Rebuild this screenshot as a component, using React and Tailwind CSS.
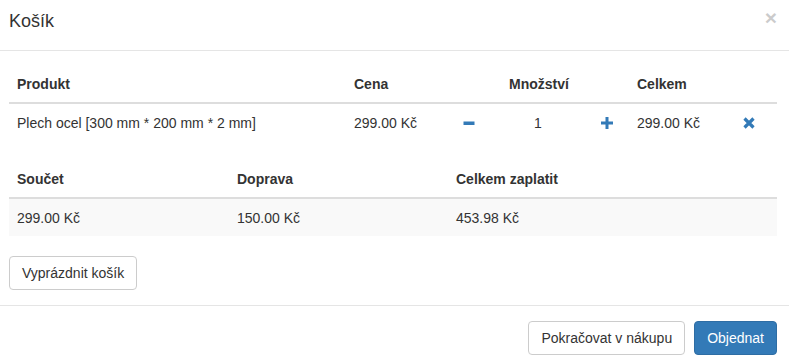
import React from 'react';

const items = [
   { name: 'Plech ocel [300 mm * 200 mm * 2 mm]', price: '299.00 Kč', qty: 1, total: '299.00 Kč' },
];

function Minus() {
   return (
      <svg width="12" height="12" viewBox="0 0 12 12" className="inline-block align-middle fill-[#337ab7] -mt-[3px]">
         <rect x="0.5" y="4.5" width="11" height="3.5" />
      </svg>
   );
}

function Plus() {
   return (
      <svg width="12" height="12" viewBox="0 0 12 12" className="inline-block align-middle fill-[#337ab7] -mt-[3px]">
         <path d="M4.5 0h3v4.5H12v3H7.5V12h-3V7.5H0v-3h4.5z" />
      </svg>
   );
}

function Remove() {
   return (
      <svg width="12" height="12" viewBox="0 0 12 12" className="inline-block align-middle -mt-[3px]">
         <path d="M1.5 1.5L10.5 10.5M10.5 1.5L1.5 10.5" stroke="#337ab7" strokeWidth="3.2" />
      </svg>
   );
}

export default function App() {
   return (
      <div className="w-[789px] h-[363px] overflow-hidden bg-white text-[14px] leading-[20px] text-[#333] font-['Liberation_Sans',Arial,sans-serif]">
         <div className="flex items-start justify-between pt-[9px] pb-[15px] pl-[9px] pr-[12px] border-b border-[#e5e5e5]">
            <h4 className="text-[18px] leading-[25.7px]">Košík</h4>
            <button className="text-[21px] leading-none font-bold text-black opacity-20 -mt-[2px]">×</button>
         </div>

         <div className="pt-[15px] pb-[15px] pl-[9px] pr-[12px]">
            <table className="w-[768px] table-fixed border-collapse mb-[20px]">
               <colgroup>
                  <col className="w-[337px]" />
                  <col className="w-[109px]" />
                  <col className="w-[28px]" />
                  <col className="w-[110px]" />
                  <col className="w-[36px]" />
                  <col className="w-[106px]" />
                  <col className="w-[42px]" />
               </colgroup>
               <thead>
                  <tr className="border-b-2 border-[#ddd]">
                     <th className="p-2 text-left font-bold">Produkt</th>
                     <th className="p-2 text-left font-bold">Cena</th>
                     <th colSpan={3} className="p-2 pr-[14px] text-center font-bold">Množství</th>
                     <th className="p-2 text-left font-bold">Celkem</th>
                     <th className="p-2" />
                  </tr>
               </thead>
               <tbody>
                  {items.map((item, index) => (
                     <tr key={index}>
                        <td className="p-2 pt-[9px]">{item.name}</td>
                        <td className="p-2 pt-[9px]">{item.price}</td>
                        <td className="p-2 pt-[9px]"><Minus /></td>
                        <td className="p-2 pt-[9px] text-center">{item.qty}</td>
                        <td className="p-2 pt-[9px]"><Plus /></td>
                        <td className="p-2 pt-[9px]">{item.total}</td>
                        <td className="p-2 pt-[9px]"><Remove /></td>
                     </tr>
                  ))}
               </tbody>
            </table>

            <table className="w-[768px] table-fixed border-collapse mb-[20px]">
               <colgroup>
                  <col className="w-[220px]" />
                  <col className="w-[219px]" />
                  <col className="w-[329px]" />
               </colgroup>
               <thead>
                  <tr className="border-b-2 border-[#ddd]">
                     <th className="p-2 text-left font-bold">Součet</th>
                     <th className="p-2 text-left font-bold">Doprava</th>
                     <th className="p-2 text-left font-bold">Celkem zaplatit</th>
                  </tr>
               </thead>
               <tbody>
                  <tr className="bg-[#f9f9f9]">
                     <td className="p-2 pt-[9px]">299.00 Kč</td>
                     <td className="p-2 pt-[9px]">150.00 Kč</td>
                     <td className="p-2 pt-[9px]">453.98 Kč</td>
                  </tr>
               </tbody>
            </table>

            <button className="h-[34px] px-3 border border-[#ccc] rounded-[4px] bg-white text-[#333]">Vyprázdnit košík</button>
         </div>

         <div className="flex justify-end gap-[9px] pt-[15px] pb-[15px] pl-[9px] pr-[12px] border-t border-[#e5e5e5]">
            <button className="h-[34px] px-3 border border-[#ccc] rounded-[4px] bg-white text-[#333]">Pokračovat v nákupu</button>
            <button className="h-[34px] px-3 border border-[#2e6da4] rounded-[4px] bg-[#337ab7] text-white">Objednat</button>
         </div>
      </div>
   );
}
